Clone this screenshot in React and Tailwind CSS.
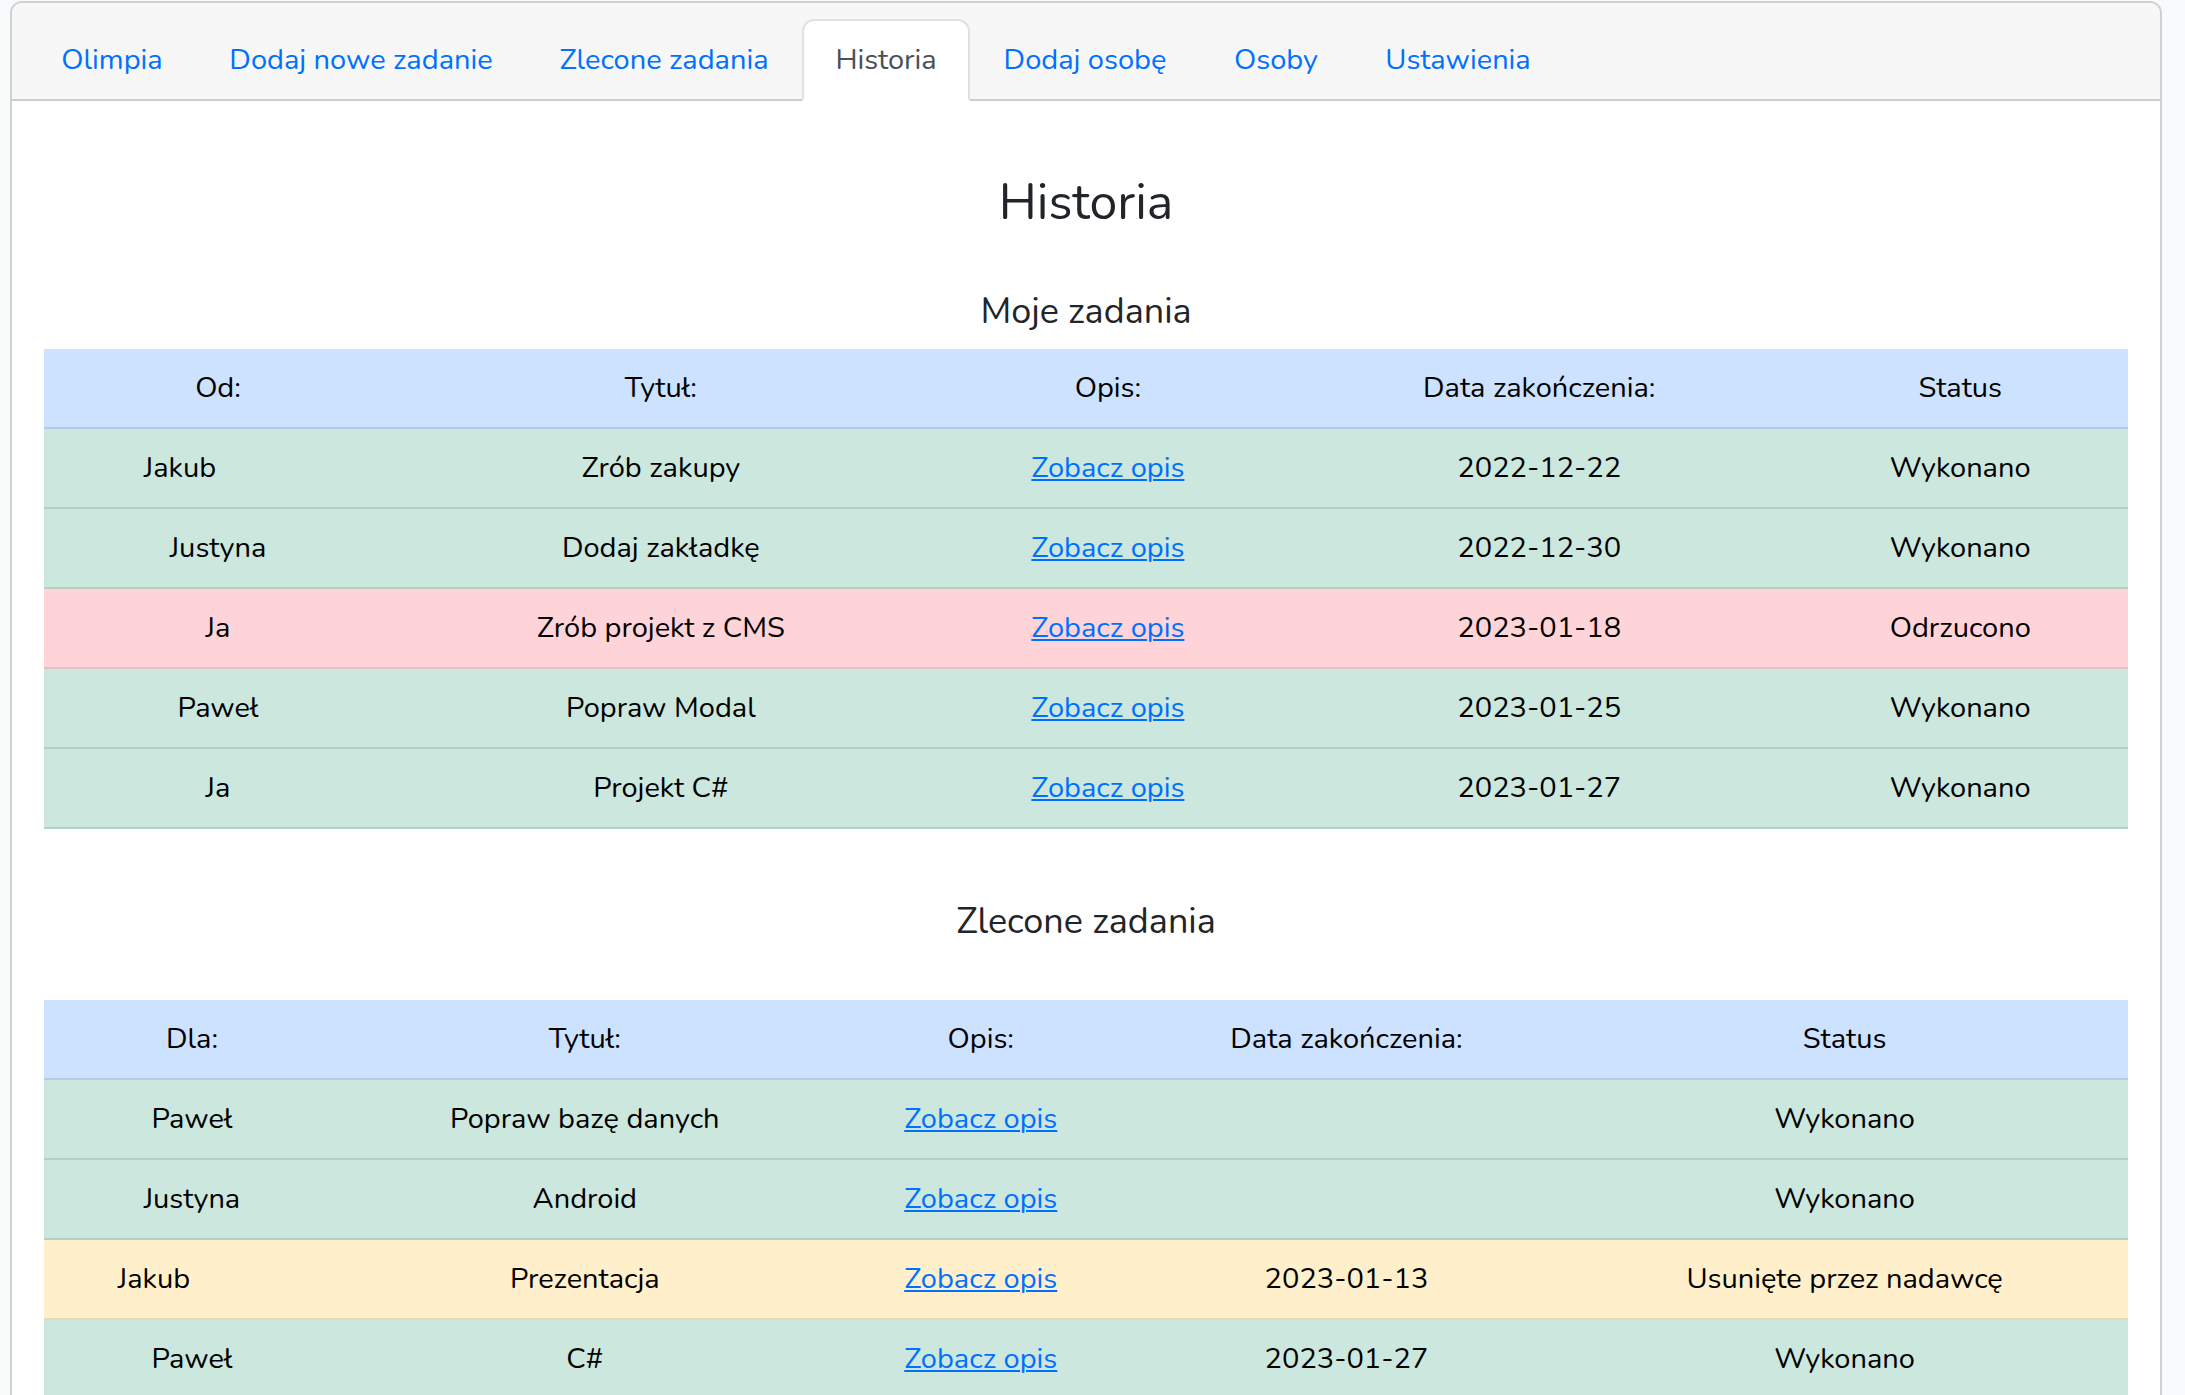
const tabs = [
  { label: 'Olimpia', width: 'min-w-[168px]' },
  { label: 'Dodaj nowe zadanie', width: 'min-w-[330px]' },
  { label: 'Zlecone zadania', width: 'min-w-[276px]' },
  { label: 'Historia', width: 'min-w-[168px]', active: true },
  { label: 'Dodaj osobę', width: 'min-w-[230px]' },
  { label: 'Osoby', width: 'min-w-[152px]' },
  { label: 'Ustawienia', width: 'min-w-[212px]' },
];

const tones = {
  done: 'bg-[#cce7dd] border-[#b6cfc5]',
  rejected: 'bg-[#ffd4d9] border-[#e6bfc4]',
  removed: 'bg-[#fff0cb] border-[#e6d9b5]',
};

const myTasks = {
  columns: ['w-[16.7%]', 'w-[25.8%]', 'w-[17.1%]', 'w-[24.3%]', 'w-[16.1%]'],
  headers: ['Od:', 'Tytuł:', 'Opis:', 'Data zakończenia:', 'Status'],
  rows: [
    { person: 'Jakub', title: 'Zrób zakupy', date: '2022-12-22', status: 'Wykonano', tone: 'done' },
    { person: 'Justyna', title: 'Dodaj zakładkę', date: '2022-12-30', status: 'Wykonano', tone: 'done' },
    { person: 'Ja', title: 'Zrób projekt z CMS', date: '2023-01-18', status: 'Odrzucono', tone: 'rejected' },
    { person: 'Paweł', title: 'Popraw Modal', date: '2023-01-25', status: 'Wykonano', tone: 'done' },
    { person: 'Ja', title: 'Projekt C#', date: '2023-01-27', status: 'Wykonano', tone: 'done' },
  ],
};

const assignedTasks = {
  columns: ['w-[14.2%]', 'w-[23.5%]', 'w-[14.5%]', 'w-[20.6%]', 'w-[27.2%]'],
  headers: ['Dla:', 'Tytuł:', 'Opis:', 'Data zakończenia:', 'Status'],
  rows: [
    { person: 'Paweł', title: 'Popraw bazę danych', date: '', status: 'Wykonano', tone: 'done' },
    { person: 'Justyna', title: 'Android', date: '', status: 'Wykonano', tone: 'done' },
    { person: 'Jakub', title: 'Prezentacja', date: '2023-01-13', status: 'Usunięte przez nadawcę', tone: 'removed' },
    { person: 'Paweł', title: 'C#', date: '2023-01-27', status: 'Wykonano', tone: 'done' },
  ],
};

function Cell({ tone, children }) {
  return <td className={`h-20 border-b-2 px-4 ${tones[tone]}`}>{children}</td>;
}

function TaskTable({ label, columns, headers, rows }) {
  return (
    <table aria-label={label} className="w-full table-fixed border-separate border-spacing-0 text-center text-black">
      <colgroup>
        {columns.map((width, i) => (
          <col key={i} className={width} />
        ))}
      </colgroup>
      <thead>
        <tr>
          {headers.map((header) => (
            <th
              key={header}
              scope="col"
              className="h-20 border-b-2 border-[#b5c9e8] bg-[#cce2ff] px-4 font-normal"
            >
              {header}
            </th>
          ))}
        </tr>
      </thead>
      <tbody>
        {rows.map((row, i) => (
          <tr key={i}>
            <Cell tone={row.tone}>
              <span className={row.person === 'Jakub' ? 'pr-19' : ''}>{row.person}</span>
            </Cell>
            <Cell tone={row.tone}>{row.title}</Cell>
            <Cell tone={row.tone}>
              <a href="#opis" className="text-[#0070ff] underline decoration-2 underline-offset-2">Zobacz opis</a>
            </Cell>
            <Cell tone={row.tone}>{row.date}</Cell>
            <Cell tone={row.tone}>{row.status}</Cell>
          </tr>
        ))}
      </tbody>
    </table>
  );
}

export default function App() {
  return (
    <div className="h-screen overflow-hidden bg-[#f8fafc] pt-px pr-[23px] pl-[10px] font-[Nunito,Lato,sans-serif] text-[29px] leading-[46px] text-[#212529]">
      <main className="min-h-full rounded-t-[12px] border-2 border-[#d0d1d1] bg-white">
        <header className="rounded-t-[10px] border-b-2 border-[#cbcccc] bg-[#f7f7f7] px-4 pt-4">
          <nav className="-mb-0.5 flex">
            {tabs.map((tab) => (
              <a
                key={tab.label}
                href="#tab"
                aria-current={tab.active ? 'page' : undefined}
                className={`${tab.width} rounded-t-[12px] border-2 py-4 text-center whitespace-nowrap ${
                  tab.active
                    ? 'border-[#dee2e6] border-b-white bg-white text-[#495057]'
                    : 'border-transparent text-[#0070ff]'
                }`}
              >
                {tab.label}
              </a>
            ))}
          </nav>
        </header>
        <div className="p-8 text-center">
          <h1 className="mt-[38px] text-[50px] leading-[64px]">Historia</h1>
          <h2 className="mt-[55px] mb-[15px] text-[36px] leading-[44px]">Moje zadania</h2>
          <TaskTable label="Moje zadania" {...myTasks} />
          <h2 className="mt-[71px] mb-14 text-[36px] leading-[44px]">Zlecone zadania</h2>
          <TaskTable label="Zlecone zadania" {...assignedTasks} />
        </div>
      </main>
    </div>
  );
}
